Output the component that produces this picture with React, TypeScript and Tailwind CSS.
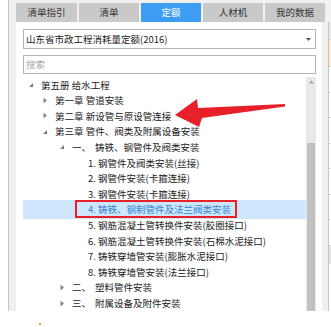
import type { ReactNode } from "react";

const font = { fontFamily: '"Noto Sans CJK SC", "Liberation Sans", sans-serif' };

type Row = {
  indent: number;
  arrow?: "open" | "closed";
  label: ReactNode;
  active?: boolean;
};

function Arrow({ kind }: { kind?: "open" | "closed" }) {
  if (kind === "open") {
    return (
      <svg width="6" height="6" viewBox="0 0 6 6" className="shrink-0">
        <polygon points="5,1 5,5 1,5" fill="#7a7a7a" />
      </svg>
    );
  }
  if (kind === "closed") {
    return (
      <svg width="6" height="7" viewBox="0 0 6 7" className="shrink-0">
        <polygon points="1.5,0.5 5,3.5 1.5,6.5" fill="#8a8a8a" />
      </svg>
    );
  }
  return <span className="w-[6px] shrink-0" />;
}

const rows: Row[] = [
  { indent: 28, arrow: "open", label: "第五册 给水工程" },
  { indent: 42, arrow: "closed", label: "第一章 管道安装" },
  { indent: 42, arrow: "closed", label: "第二章 新设管与原设管连接" },
  { indent: 42, arrow: "open", label: "第三章 管件、阀类及附属设备安装" },
  {
    indent: 59,
    arrow: "open",
    label: (
      <>
        <span className="inline-block w-[23px]">一、</span>铸铁、钢管件及阀类安装
      </>
    ),
  },
  { indent: 75, label: "1. 钢管件及阀类安装(丝接)" },
  { indent: 75, label: "2. 钢管件安装(卡箍连接)" },
  { indent: 75, label: "3. 钢管件安装(卡箍连接)" },
  { indent: 75, label: "4. 铸铁、钢制管件及法兰阀类安装", active: true },
  { indent: 75, label: "5. 钢筋混凝土管转换件安装(胶圈接口)" },
  { indent: 75, label: "6. 钢筋混凝土管转换件安装(石棉水泥接口)" },
  { indent: 75, label: "7. 铸铁穿墙管安装(膨胀水泥接口)" },
  { indent: 75, label: "8. 铸铁穿墙管安装(法兰接口)" },
  {
    indent: 59,
    arrow: "closed",
    label: (
      <>
        <span className="inline-block w-[23px]">二、</span>塑料管件安装
      </>
    ),
  },
  {
    indent: 59,
    arrow: "closed",
    label: (
      <>
        <span className="inline-block w-[23px]">三、</span>附属设备及附件安装
      </>
    ),
  },
];

const tabs = [
  { name: "清单指引", w: "w-[61px]" },
  { name: "清单", w: "w-[60px]" },
  { name: "定额", w: "w-[60px]", active: true },
  { name: "人材机", w: "w-[60px]" },
  { name: "我的数据", w: "w-[60px]" },
];

export default function App() {
  return (
    <div className="w-[331px] h-[327px] bg-white overflow-hidden relative text-[9.5px] text-[#222]" style={font}>
      <div className="flex h-[311px]">
        <div className="w-[8px] bg-white shrink-0" />
        <div className="flex-1 flex flex-col border-l border-[#c6c6c6] bg-[#f0f0f0] min-w-0">
          {/* Tabs */}
          <div className="flex gap-[2px] pl-[7px] pt-[3px] h-[22px] shrink-0">
            {tabs.map((t) => (
              <div
                key={t.name}
                className={`${t.w} h-[19px] shrink-0 flex items-center justify-center ${
                  t.active ? "bg-[#3d9df3] text-white" : "bg-[#c9c9c9] text-[#333]"
                }`}
              >
                {t.name}
              </div>
            ))}
          </div>

          <div className="flex flex-1 min-h-0">
            {/* Left panel */}
            <div className="ml-[7px] w-[306px] shrink-0 bg-white flex flex-col pl-[7px] pr-[6px]">
              <div className="mt-[7px] h-[20px] border border-[#b5b5b5] flex items-center pl-[2px] pr-[4px] shrink-0">
                <span className="flex-1 text-[#222]">山东省市政工程消耗量定额(2016)</span>
                <svg width="5" height="3" viewBox="0 0 5 3">
                  <polygon points="0,0 5,0 2.5,3" fill="#555" />
                </svg>
              </div>
              <div className="mt-[6px] h-[19px] border border-[#b5b5b5] flex items-center pl-[2px] text-[#a8a8a8] shrink-0">
                搜索
              </div>

              {/* Tree */}
              <div className="mt-[3px] flex-1 flex min-h-0">
                <div className="flex-1 flex flex-col min-w-0">
                  {rows.map((r, i) => (
                    <div
                      key={i}
                      className="h-[15.6px] shrink-0 flex items-center relative whitespace-nowrap"
                      style={{ paddingLeft: r.indent - 23 }}
                    >
                      {r.active && (
                        <>
                          <span className="absolute left-0 right-0 -top-[2px] -bottom-[2px] bg-[#cde6fb]" />
                          <span className="absolute left-[52px] w-[162px] -top-[2px] h-[18px] border-2 border-[#e8202a]" />
                        </>
                      )}
                      <span className="relative flex items-center">
                        <Arrow kind={r.arrow} />
                        <span
                          className={`ml-[7px] ${r.active ? "text-[#2f84d8]" : "text-[#222]"}`}
                        >
                          {r.label}
                        </span>
                      </span>
                    </div>
                  ))}
                </div>
                {/* Scrollbar */}
                <div className="w-[10px] shrink-0 bg-[#e9e9e9] flex flex-col items-center">
                  <svg width="7" height="6" viewBox="0 0 7 6" className="mt-[2px]">
                    <polygon points="3.5,1.5 6,4.5 1,4.5" fill="#a0a0a0" />
                  </svg>
                  <div className="mt-[58px] w-[8px] flex-1 bg-[#c1c1c1]" />
                </div>
              </div>
            </div>

            {/* Right panel */}
            <div className="ml-[6px] flex-1 border-l border-[#c6c6c6] bg-white flex flex-col overflow-hidden">
              <div className="h-[18px] bg-[#e8e8e8] border-b border-[#d8d8d8]" />
              <div className="h-[27px] bg-[#fde8cf] border-b border-[#d8d8d8] flex items-center pl-[3px] font-bold">1</div>
              {["2", "3", "4", "5", "6", "7", "8"].map((n) => (
                <div key={n} className="h-[25.5px] border-b border-[#d8d8d8] flex items-center pl-[3px] text-[#555]">
                  {n}
                </div>
              ))}
              <div className="h-[18px] bg-[#e2e2e2] flex items-center pl-[3px]">
                <span className="w-[3px] h-[1px] bg-[#e3a04a]" />
              </div>
              <div className="pl-[2px] pt-[3px] leading-[11px]">
                <div className="text-[#c47a16]">工</div>
                <div className="text-[#2f6fb8]">核</div>
              </div>
            </div>
          </div>
        </div>
      </div>

      {/* Red arrow callout */}
      <svg width="331" height="327" className="absolute left-0 top-0 pointer-events-none">
        <polygon
          points="175,115 197,99 198,108 285,104 285,106.5 202,118 199,127"
          fill="#e8202a"
        />
      </svg>

      <span className="absolute left-[39px] top-[323px] w-[2px] h-[2px] bg-[#f0a030]" />
    </div>
  );
}
